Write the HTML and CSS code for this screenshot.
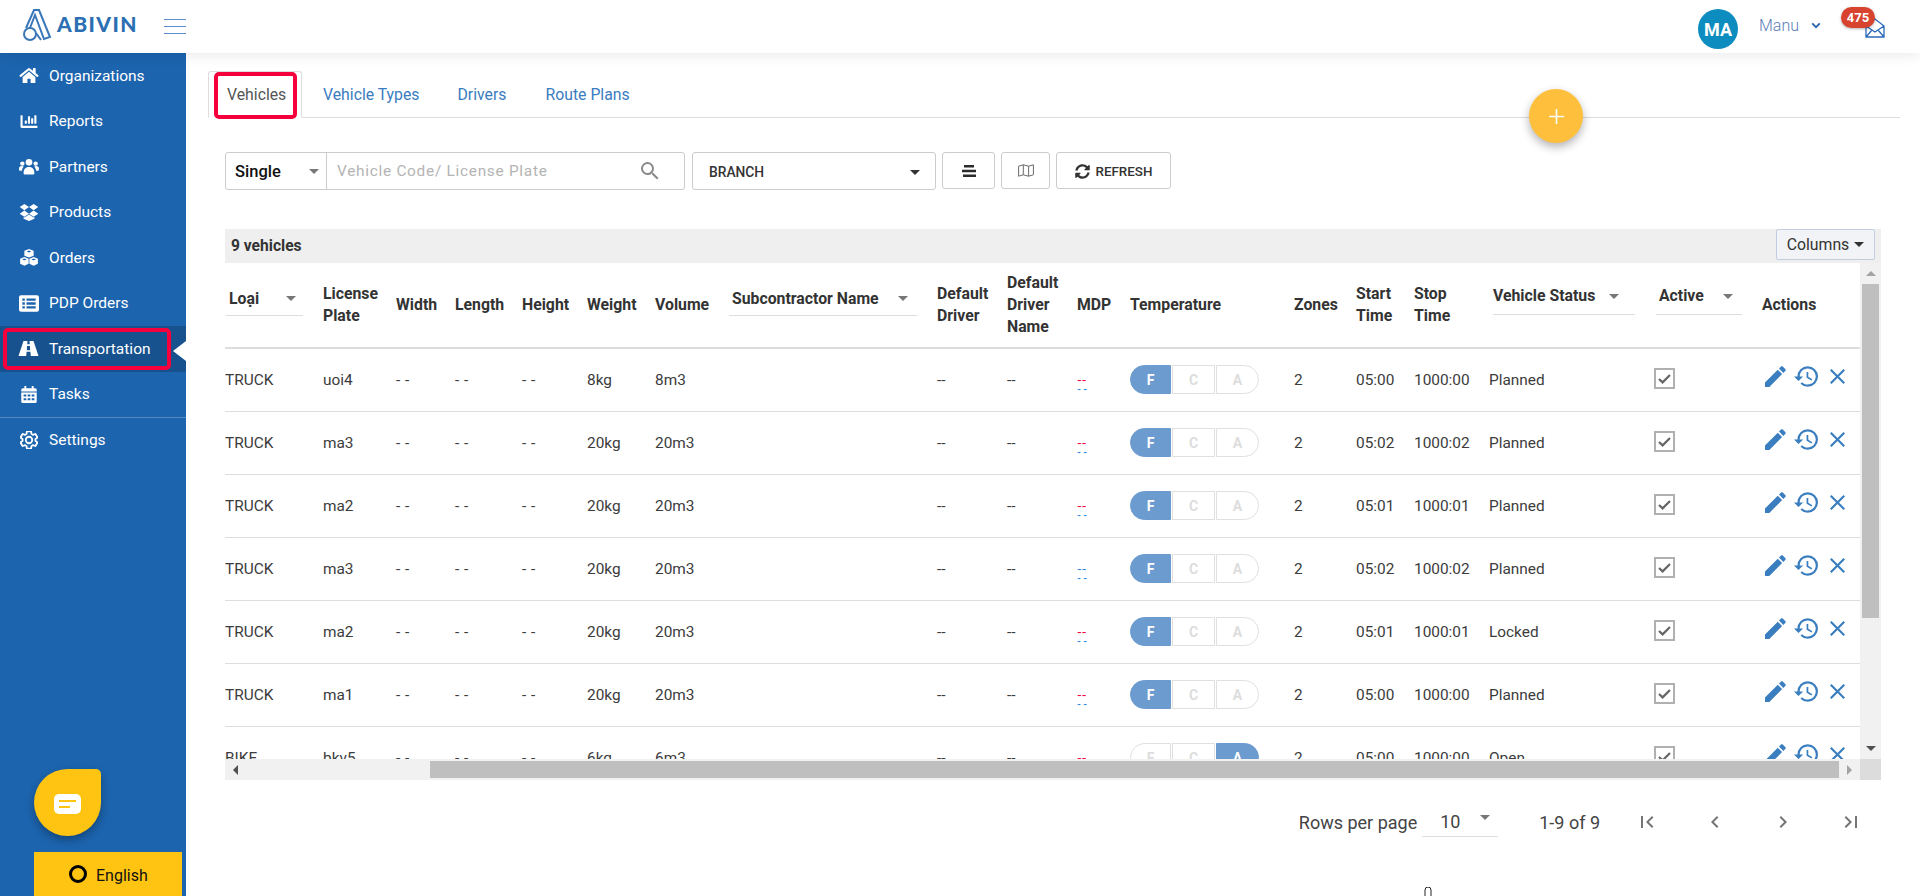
FILE: index.html
```html
<!DOCTYPE html>
<html lang="en">
<head>
<meta charset="utf-8">
<title>Abivin - Vehicles</title>
<link rel="stylesheet" href="styles.css">
</head>
<body>
<svg class="sprite" aria-hidden="true">
  <symbol id="i-edit" viewBox="3 3 18.2 18"><path d="M3 17.25V21h3.75L17.81 9.94l-3.75-3.75L3 17.25zM20.71 7.04c.39-.39.39-1.02 0-1.41l-2.34-2.34a.996.996 0 0 0-1.41 0l-1.83 1.83 3.75 3.75 1.83-1.83z"/></symbol>
  <symbol id="i-history" viewBox="1 3 21 18"><path d="M13 3a9 9 0 0 0-9 9H1l3.89 3.89.07.14L9 12H6c0-3.87 3.13-7 7-7s7 3.13 7 7-3.13 7-7 7c-1.93 0-3.68-.79-4.94-2.06l-1.42 1.42A8.954 8.954 0 0 0 13 21a9 9 0 0 0 0-18zm-1 5v5l4.28 2.54.72-1.21-3.5-2.08V8H12z"/></symbol>
  <symbol id="i-close" viewBox="5 5 14 14"><path d="M19 6.41L17.59 5 12 10.59 6.41 5 5 6.41 10.59 12 5 17.59 6.41 19 12 13.41 17.59 19 19 17.59 13.41 12z"/></symbol>
  <symbol id="i-check" viewBox="0 0 17 17"><path d="M3 9l3.6 3.4L14 5" fill="none" stroke="#666" stroke-width="2.2"/></symbol>
</svg>

<header class="topbar">
  <a class="logo">
    <svg class="logo-mark" viewBox="23 8 30 32"><g fill="none" stroke="#3a77b8" stroke-width="2"><circle cx="30" cy="33" r="6"/><path d="M26 27L34 9h5l11 27-6 2-9-24-5 13"/><path d="M36 32l5 7"/></g></svg>
    <span class="logo-text">ABIVIN</span>
  </a>
  <button class="burger" aria-label="menu"><i></i><i></i><i></i></button>
  <div class="user">
    <span class="avatar">MA</span>
    <span class="user-name">Manu</span>
    <svg class="chev" viewBox="0 0 12 8"><path d="M1.5 1.5L6 6l4.500-4.500" fill="none" stroke="#2a64ad" stroke-width="2.200"/></svg>
    <span class="mail">
      <svg class="mail-icon" viewBox="0 0 20 20"><path d="M1 8L10 1l9 7v11H1zM1 8l9 6 9-6M1 19l6-7M19 19l-6-7" fill="none" stroke="#2a68b8" stroke-width="1.300"/></svg>
      <b class="badge">475</b>
    </span>
  </div>
</header>

<div class="layout">
  <aside class="sidebar">
    <nav class="nav">
      <a class="nav-item"><svg class="nav-ic" viewBox="0 0 576 512"><path d="M280.37 148.26L96 300.11V464a16 16 0 0 0 16 16l112.06-.29a16 16 0 0 0 15.92-16V368a16 16 0 0 1 16-16h64a16 16 0 0 1 16 16v95.64a16 16 0 0 0 16 16.05L464 480a16 16 0 0 0 16-16V300L295.67 148.26a12.19 12.19 0 0 0-15.3 0zM571.6 251.47L488 182.56V44.05a12 12 0 0 0-12-12h-56a12 12 0 0 0-12 12v72.61L318.47 43a48 48 0 0 0-61 0L4.34 251.47a12 12 0 0 0-1.6 16.9l25.5 31A12 12 0 0 0 45.15 301l235.22-193.74a12.19 12.19 0 0 1 15.3 0L530.9 301a12 12 0 0 0 16.9-1.6l25.5-31a12 12 0 0 0-1.7-16.93z"/></svg>Organizations</a>
      <a class="nav-item"><svg class="nav-ic" viewBox="0 0 512 512"><path d="M332.8 320h38.4c6.4 0 12.8-6.4 12.8-12.8V172.8c0-6.4-6.4-12.8-12.8-12.8h-38.4c-6.4 0-12.8 6.4-12.8 12.8v134.4c0 6.4 6.4 12.8 12.8 12.8zm96 0h38.4c6.4 0 12.8-6.4 12.8-12.8V76.8c0-6.4-6.4-12.8-12.8-12.8h-38.4c-6.4 0-12.8 6.4-12.8 12.8v230.4c0 6.4 6.4 12.8 12.8 12.8zm-288 0h38.4c6.4 0 12.8-6.4 12.8-12.8v-70.4c0-6.4-6.4-12.8-12.8-12.8h-38.4c-6.4 0-12.8 6.4-12.8 12.8v70.4c0 6.4 6.4 12.8 12.8 12.8zm96 0h38.4c6.4 0 12.8-6.4 12.8-12.8V108.8c0-6.4-6.4-12.8-12.8-12.8h-38.4c-6.4 0-12.8 6.4-12.8 12.8v198.4c0 6.4 6.4 12.8 12.8 12.8zM496 384H64V80c0-8.84-7.16-16-16-16H16C7.16 64 0 71.16 0 80v336c0 17.67 14.33 32 32 32h464c8.84 0 16-7.16 16-16v-32c0-8.84-7.16-16-16-16z"/></svg>Reports</a>
      <a class="nav-item"><svg class="nav-ic" viewBox="0 0 24 20"><circle cx="12" cy="5" r="4"/><circle cx="4" cy="6.500" r="2.600"/><circle cx="20" cy="6.500" r="2.600"/><path d="M5.500 18c0-4.500 2-7.500 6.500-7.500s6.500 3 6.500 7.500c0 1-1 1.500-1.500 1.500H7c-.5 0-1.500-.5-1.500-1.500zM0 13c0-2.500 1-3.500 3.500-3.500 1 0 1.700.3 2.200.7-1.300 1.200-2 2.700-2.200 4.800H1c-.6 0-1-.6-1-2zM24 13c0-2.500-1-3.500-3.500-3.500-1 0-1.700.3-2.200.7 1.300 1.200 2 2.700 2.200 4.800H23c.6 0 1-.6 1-2z"/></svg>Partners</a>
      <a class="nav-item"><svg class="nav-ic" viewBox="0 0 24 22"><path d="M6 0l6 4-6 4-6-4zM18 0l6 4-6 4-6-4zM6 8.500l6 4-6 4-6-4zM18 8.500l6 4-6 4-6-4zM12 13.500l6 3.900 1-.6v2.200L12 22l-7-3v-2.200l1 .6z"/></svg>Products</a>
      <a class="nav-item"><svg class="nav-ic" viewBox="0 0 24 22"><path fill-rule="evenodd" d="M12 0l6 2.400v6.200L12 11 6 8.600V2.400zM12 2L9 3.200l3 1.200 3-1.200zM6 10.500l5.500 2.200v6.500L6 21.800.5 19.200v-6.500zM6 12.300l-3 1.200 3 1.200 3-1.200zM18 10.500l5.500 2.200v6.500L18 21.800l-5.500-2.600v-6.500zM18 12.300l-3 1.200 3 1.200 3-1.200z"/></svg>Orders</a>
      <a class="nav-item"><svg class="nav-ic" viewBox="0 0 24 20"><path fill-rule="evenodd" d="M2.500 0h19A2.500 2.500 0 0 1 24 2.500v15a2.500 2.500 0 0 1-2.500 2.500h-19A2.500 2.500 0 0 1 0 17.500v-15A2.500 2.500 0 0 1 2.500 0zM4 4v2.800h3V4zM9 4v2.800h11V4zM4 8.600v2.800h3V8.600zM9 8.600v2.800h11V8.600zM4 13.200V16h3v-2.800zM9 13.200V16h11v-2.800z"/></svg>PDP Orders</a>
      <a class="nav-item active"><svg class="nav-ic road" viewBox="0 0 24 18"><path fill-rule="evenodd" d="M6 0h4.800l-.3 4h3l-.3-4H18l6 18h-9.300l-.4-5H9.700l-.4 5H0zM10.300 6l-.3 5h4l-.3-5z"/></svg>Transportation</a>
      <a class="nav-item"><svg class="nav-ic" viewBox="0 0 20 22"><path fill-rule="evenodd" d="M4 0h2.500v3h7V0H16v3h2a2 2 0 0 1 2 2v2H0V5a2 2 0 0 1 2-2h2zM0 8.500h20V20a2 2 0 0 1-2 2H2a2 2 0 0 1-2-2zM3 11v2.500h3.500V11zM8.250 11v2.500h3.500V11zM13.500 11v2.500H17V11zM3 16v2.500h3.500V16zM8.250 16v2.500h3.500V16zM13.500 16v2.500H17V16z"/></svg>Tasks</a>
      <a class="nav-item divided"><svg class="nav-ic gear" viewBox="2 2 20 20"><path fill="none" stroke="#fff" stroke-width="2" d="M19.140 12.940c.04-.3.06-.61.06-.94 0-.32-.02-.64-.07-.94l2.030-1.580a.49.49 0 0 0 .12-.61l-1.920-3.320a.488.488 0 0 0-.59-.22l-2.390.96c-.5-.38-1.030-.7-1.620-.94l-.36-2.540a.484.484 0 0 0-.48-.41h-3.840c-.24 0-.43.17-.47.41l-.36 2.540c-.59.24-1.130.57-1.620.94l-2.390-.96c-.22-.08-.47 0-.59.22L2.740 8.870c-.12.21-.08.47.12.61l2.030 1.580c-.05.3-.09.63-.09.94s.02.64.07.94l-2.030 1.580a.49.49 0 0 0-.12.61l1.920 3.320c.12.22.37.29.59.22l2.390-.96c.5.38 1.030.7 1.620.94l.36 2.540c.05.24.24.41.48.41h3.840c.24 0 .44-.17.47-.41l.36-2.540c.59-.24 1.130-.56 1.620-.94l2.390.96c.22.08.47 0 .59-.22l1.920-3.320c.12-.22.07-.47-.12-.61l-2.010-1.580zM12 15.600c-1.980 0-3.600-1.620-3.600-3.600s1.620-3.600 3.600-3.600 3.600 1.620 3.600 3.600-1.620 3.600-3.600 3.600z"/></svg>Settings</a>
    </nav>
    <div class="side-foot">
      <button class="chat" aria-label="chat"><svg class="chat-ic" viewBox="0 0 27 20"><rect width="27" height="20" rx="5" fill="#fff"/><rect x="5" y="6" width="17" height="2" fill="#ffc412"/><rect x="5" y="12" width="11" height="2" fill="#ffc412"/></svg></button>
      <button class="lang"><i class="lang-ring"></i>English</button>
    </div>
  </aside>

  <main class="content">
    <ul class="tabs">
      <li class="tab current">Vehicles</li>
      <li class="tab">Vehicle Types</li>
      <li class="tab">Drivers</li>
      <li class="tab">Route Plans</li>
    </ul>
    <button class="fab" aria-label="add"><svg viewBox="0 0 16 16"><path d="M8 1v14M1 8h14" stroke="#fff" stroke-width="1.500"/></svg></button>

    <section class="panel">
      <div class="filters">
        <div class="search">
          <div class="search-type">Single<i class="caret grey"></i></div>
          <div class="search-input"><span class="placeholder">Vehicle Code/ License Plate</span><svg class="search-ic" viewBox="3 3 18 18"><path d="M15.500 14h-.79l-.28-.27A6.471 6.471 0 0 0 16 9.500 6.500 6.500 0 1 0 9.500 16c1.610 0 3.090-.59 4.230-1.570l.27.28v.79l5 4.990L20.490 19l-4.990-5zm-6 0C7.010 14 5 11.990 5 9.500S7.010 5 9.500 5 14 7.010 14 9.500 11.990 14 9.500 14z"/></svg></div>
        </div>
        <div class="branch"><span>BRANCH</span><i class="caret dark"></i></div>
        <button class="btn b-align"><svg viewBox="0 0 14 12" class="ic-align"><path d="M2 0h10v2.500H2zM0 4.700h14v2.500H0zM1 9.500h13V12H1z" fill="#2b2b2b"/></svg></button>
        <button class="btn b-map"><svg viewBox="0 0 16 13" class="ic-map"><path d="M.6 2.200L5.300.8l5.300 1.400L15.400.8v10l-4.800 1.400-5.300-1.400L.6 12.200zM5.300.8v10M10.600 2.200v10" fill="none" stroke="#6a6a6a"/></svg></button>
        <button class="btn b-refresh"><svg class="ic-sync" viewBox="0 0 512 512"><path d="M370.720 133.280C339.458 104.008 298.888 87.962 255.848 88c-77.458.068-144.328 53.178-162.791 126.850-1.344 5.363-6.122 9.150-11.651 9.150H24.103c-7.498 0-13.194-6.807-11.807-14.176C33.933 94.924 134.813 8 256 8c66.448 0 126.791 26.136 171.315 68.685L463.030 40.970C478.149 25.851 504 36.559 504 57.941V192c0 13.255-10.745 24-24 24H345.941c-21.382 0-32.090-25.851-16.971-40.971l41.750-41.749zM32 296h134.059c21.382 0 32.090 25.851 16.971 40.971l-41.750 41.750c31.262 29.273 71.835 45.319 114.876 45.280 77.418-.07 144.315-53.144 162.787-126.849 1.344-5.363 6.122-9.150 11.651-9.150h57.304c7.498 0 13.194 6.807 11.807 14.176C478.067 417.076 377.187 504 256 504c-66.448 0-126.791-26.136-171.315-68.685L48.970 471.030C33.851 486.149 8 475.441 8 454.059V320c0-13.255 10.745-24 24-24z"/></svg>REFRESH</button>
      </div>

      <div class="card">
        <div class="card-head">
          <span class="count">9 vehicles</span>
          <button class="columns">Columns<i class="caret dark small"></i></button>
        </div>
        <div class="grid">
          <div class="viewport">
            <table class="vt">
              <colgroup>
                <col class="c1"><col class="c2"><col class="c3"><col class="c4"><col class="c5"><col class="c6"><col class="c7"><col class="c8"><col class="c9"><col class="c10"><col class="c11"><col class="c12"><col class="c13"><col class="c14"><col class="c15"><col class="c16"><col class="c17"><col class="c18">
              </colgroup>
              <thead>
                <tr>
                  <th><div class="flt f-loai"><span>Loại</span><i class="caret grey"></i></div></th>
                  <th>License<br>Plate</th><th>Width</th><th>Length</th><th>Height</th><th>Weight</th><th>Volume</th>
                  <th><div class="flt f-sub"><span>Subcontractor Name</span><i class="caret grey"></i></div></th>
                  <th>Default<br>Driver</th><th>Default<br>Driver<br>Name</th><th>MDP</th><th>Temperature</th><th>Zones</th><th>Start<br>Time</th><th>Stop<br>Time</th>
                  <th><div class="flt f-status"><span>Vehicle Status</span><i class="caret grey"></i></div></th>
                  <th><div class="flt f-active"><span>Active</span><i class="caret grey"></i></div></th>
                  <th class="th-act">Actions</th>
                </tr>
              </thead>
              <tbody>
                <tr><td>TRUCK</td><td>uoi4</td><td>- -</td><td>- -</td><td>- -</td><td>8kg</td><td>8m3</td><td></td><td>--</td><td>--</td>
                  <td><span class="mdp"><b class="red">--</b><b class="blue">- -</b></span></td>
                  <td><span class="tg"><span class="on">F</span><span>C</span><span>A</span></span></td>
                  <td>2</td><td>05:00</td><td>1000:00</td><td>Planned</td>
                  <td><span class="cb"><svg><use href="#i-check"/></svg></span></td>
                  <td><span class="acts"><svg class="a-edit"><use href="#i-edit"/></svg><svg class="a-hist"><use href="#i-history"/></svg><svg class="a-close"><use href="#i-close"/></svg></span></td></tr>
                <tr><td>TRUCK</td><td>ma3</td><td>- -</td><td>- -</td><td>- -</td><td>20kg</td><td>20m3</td><td></td><td>--</td><td>--</td>
                  <td><span class="mdp"><b class="red">--</b><b class="blue">- -</b></span></td>
                  <td><span class="tg"><span class="on">F</span><span>C</span><span>A</span></span></td>
                  <td>2</td><td>05:02</td><td>1000:02</td><td>Planned</td>
                  <td><span class="cb"><svg><use href="#i-check"/></svg></span></td>
                  <td><span class="acts"><svg class="a-edit"><use href="#i-edit"/></svg><svg class="a-hist"><use href="#i-history"/></svg><svg class="a-close"><use href="#i-close"/></svg></span></td></tr>
                <tr><td>TRUCK</td><td>ma2</td><td>- -</td><td>- -</td><td>- -</td><td>20kg</td><td>20m3</td><td></td><td>--</td><td>--</td>
                  <td><span class="mdp"><b class="red">--</b><b class="blue">- -</b></span></td>
                  <td><span class="tg"><span class="on">F</span><span>C</span><span>A</span></span></td>
                  <td>2</td><td>05:01</td><td>1000:01</td><td>Planned</td>
                  <td><span class="cb"><svg><use href="#i-check"/></svg></span></td>
                  <td><span class="acts"><svg class="a-edit"><use href="#i-edit"/></svg><svg class="a-hist"><use href="#i-history"/></svg><svg class="a-close"><use href="#i-close"/></svg></span></td></tr>
                <tr><td>TRUCK</td><td>ma3</td><td>- -</td><td>- -</td><td>- -</td><td>20kg</td><td>20m3</td><td></td><td>--</td><td>--</td>
                  <td><span class="mdp"><b class="blue top">--</b><b class="blue">- -</b></span></td>
                  <td><span class="tg"><span class="on">F</span><span>C</span><span>A</span></span></td>
                  <td>2</td><td>05:02</td><td>1000:02</td><td>Planned</td>
                  <td><span class="cb"><svg><use href="#i-check"/></svg></span></td>
                  <td><span class="acts"><svg class="a-edit"><use href="#i-edit"/></svg><svg class="a-hist"><use href="#i-history"/></svg><svg class="a-close"><use href="#i-close"/></svg></span></td></tr>
                <tr><td>TRUCK</td><td>ma2</td><td>- -</td><td>- -</td><td>- -</td><td>20kg</td><td>20m3</td><td></td><td>--</td><td>--</td>
                  <td><span class="mdp"><b class="red">--</b><b class="blue">- -</b></span></td>
                  <td><span class="tg"><span class="on">F</span><span>C</span><span>A</span></span></td>
                  <td>2</td><td>05:01</td><td>1000:01</td><td>Locked</td>
                  <td><span class="cb"><svg><use href="#i-check"/></svg></span></td>
                  <td><span class="acts"><svg class="a-edit"><use href="#i-edit"/></svg><svg class="a-hist"><use href="#i-history"/></svg><svg class="a-close"><use href="#i-close"/></svg></span></td></tr>
                <tr><td>TRUCK</td><td>ma1</td><td>- -</td><td>- -</td><td>- -</td><td>20kg</td><td>20m3</td><td></td><td>--</td><td>--</td>
                  <td><span class="mdp"><b class="red">--</b><b class="blue">- -</b></span></td>
                  <td><span class="tg"><span class="on">F</span><span>C</span><span>A</span></span></td>
                  <td>2</td><td>05:00</td><td>1000:00</td><td>Planned</td>
                  <td><span class="cb"><svg><use href="#i-check"/></svg></span></td>
                  <td><span class="acts"><svg class="a-edit"><use href="#i-edit"/></svg><svg class="a-hist"><use href="#i-history"/></svg><svg class="a-close"><use href="#i-close"/></svg></span></td></tr>
                <tr><td>BIKE</td><td>bkv5</td><td>- -</td><td>- -</td><td>- -</td><td>6kg</td><td>6m3</td><td></td><td>--</td><td>--</td>
                  <td><span class="mdp"><b class="red">--</b><b class="blue">- -</b></span></td>
                  <td><span class="tg"><span>F</span><span>C</span><span class="on">A</span></span></td>
                  <td>2</td><td>05:00</td><td>1000:00</td><td>Open</td>
                  <td><span class="cb"><svg><use href="#i-check"/></svg></span></td>
                  <td><span class="acts"><svg class="a-edit"><use href="#i-edit"/></svg><svg class="a-hist"><use href="#i-history"/></svg><svg class="a-close"><use href="#i-close"/></svg></span></td></tr>
              </tbody>
            </table>
          </div>
          <div class="vbar">
            <span class="arrow"><i class="tri up off"></i></span>
            <span class="vthumb"></span>
            <span class="arrow end"><i class="tri down"></i></span>
          </div>
          <div class="hbar">
            <span class="arrow"><i class="tri left"></i></span>
            <span class="hthumb"></span>
            <span class="arrow"><i class="tri right off"></i></span>
          </div>
          <div class="corner"></div>
        </div>
      </div>

      <div class="pager">
        <span class="rows-label">Rows per page</span>
        <span class="rows-select"><span>10</span><i class="caret grey"></i></span>
        <span class="range">1-9 of 9</span>
        <svg class="pg" viewBox="0 0 24 24"><path d="M18.410 16.590L13.820 12l4.590-4.590L17 6l-6 6 6 6zM6 6h2v12H6z"/></svg>
        <svg class="pg" viewBox="0 0 24 24"><path d="M15.410 7.410L14 6l-6 6 6 6 1.410-1.410L10.830 12z"/></svg>
        <svg class="pg" viewBox="0 0 24 24"><path d="M10 6L8.590 7.410 13.170 12l-4.580 4.590L10 18l6-6z"/></svg>
        <svg class="pg" viewBox="0 0 24 24"><path d="M5.590 7.410L10.180 12l-4.590 4.590L7 18l6-6-6-6zM16 6h2v12h-2z"/></svg>
      </div>
    </section>
  </main>
</div>

<svg class="pointer" viewBox="0 0 8 10"><path d="M1 10V3a3 3 0 0 1 6 0v7" fill="#fff" stroke="#222"/></svg>
</body>
</html>
```

FILE: styles.css
```css
*, *::before, *::after { box-sizing: border-box; }
html, body { margin: 0; height: 100%; }
body {
  position: relative;
  height: 896px;
  overflow: hidden;
  background: #fff;
  color: #333;
  font-family: Roboto, "Liberation Sans", sans-serif;
  font-size: 15.4px;
}
button { font: inherit; color: inherit; background: none; border: 0; padding: 0; }
ul { list-style: none; margin: 0; padding: 0; }
.sprite { display: none; }

/* top bar */
.topbar {
  position: relative;
  z-index: 5;
  height: 53px;
  display: flex;
  align-items: center;
  background: #fff;
  box-shadow: 0 3px 12px rgba(0, 0, 0, .08);
}
.logo { display: flex; align-items: center; margin-left: 23px; }
.logo-mark { width: 30px; height: 32px; margin-top: -4px; }
.logo-text {
  margin-left: 4px;
  margin-top: -6px;
  font-family: Lato, sans-serif;
  font-weight: 900;
  font-size: 21px;
  letter-spacing: 1.4px;
  color: #2c6fb3;
}
.burger { width: 22px; margin-left: 26px; margin-top: -1px; display: flex; flex-direction: column; gap: 6px; }
.burger i { height: 1px; background: #5c8fce; display: block; }
.user { margin-left: auto; display: flex; align-items: center; padding-right: 35px; }
.avatar {
  width: 40px; height: 40px; border-radius: 50%;
  background: #0d8cbf; color: #fff;
  font-weight: 700; font-size: 18px;
  display: flex; align-items: center; justify-content: center;
  margin-top: 5px;
}
.user-name { margin-left: 21px; color: #5b7db8; font-size: 16px; font-weight: 300; margin-top: -3px; }
.chev { width: 10px; height: 7px; margin-left: 12px; margin-top: -3px; }
.mail { position: relative; width: 20px; height: 20px; margin-left: 44px; margin-top: 2px; }
.mail-icon { width: 20px; height: 20px; display: block; }
.badge {
  position: absolute; top: -11px; left: -24px;
  width: 34px; height: 21px; border-radius: 11px;
  background: #d8432f; color: #fff;
  font-size: 13px; font-weight: 700;
  display: flex; align-items: center; justify-content: center;
  box-shadow: 0 1px 3px rgba(0, 0, 0, .3);
}

/* layout */
.layout { display: flex; height: 843px; }

/* sidebar */
.sidebar {
  width: 186px;
  flex: none;
  background: #1c64ae;
  color: #fff;
  display: flex;
  flex-direction: column;
}
.nav-item {
  position: relative;
  height: 45.5px;
  display: flex;
  align-items: center;
  font-size: 15.5px;
  padding-left: 49px;
}
.nav-ic { position: absolute; left: 19px; top: 14px; width: 20px; height: 17px; fill: #fff; }
.nav-ic.road { top: 15px; width: 21px; height: 15px; left: 18px; }
.nav-ic.gear { top: 13px; left: 20px; width: 18px; height: 18px; }
.nav-item.active { background: #17528f; }
.nav-item.active::before {
  content: "";
  position: absolute; right: 0; top: 15px;
  border: 10px solid transparent;
  border-left: 0;
  border-right: 13px solid #fff;
}
.nav-item.active::after {
  content: "";
  position: absolute; left: 3px; top: 2px;
  width: 168px; height: 42px;
  border: 4px solid #f5003c;
  border-radius: 5px;
}
.nav-item.divided { border-top: 1px solid rgba(255, 255, 255, .25); }
.side-foot { margin-top: auto; padding-left: 34px; display: flex; flex-direction: column; }
.chat {
  width: 67px; height: 67px;
  border-radius: 50% 5px 50% 50%;
  background: #ffc412;
  box-shadow: 0 4px 8px rgba(0, 0, 0, .3);
  display: flex; align-items: center; justify-content: center;
}
.chat-ic { width: 27px; height: 20px; margin-top: 2px; }
.lang {
  margin-top: 16px;
  width: 148px; height: 44px;
  background: #ffc412; color: #111;
  display: flex; align-items: center;
  padding: 2px 0 0 35px;
  font-size: 16px;
}
.lang-ring { width: 18px; height: 18px; border: 3.5px solid #000; border-radius: 50%; margin-right: 9px; margin-top: -2px; }

/* content */
.content { position: relative; flex: 1; padding: 18px 20px 0 22px; }
.tabs { display: flex; border-bottom: 1px solid #ddd; height: 47px; }
.tab {
  position: relative;
  height: 47px;
  padding: 0 19px;
  display: flex; align-items: center;
  color: #3a7cc0;
  font-size: 15.8px;
  white-space: nowrap;
}
.tab:nth-child(3) { padding-right: 20px; }
.tab.current {
  color: #555;
  border: 1px solid #ddd;
  border-bottom: 1px solid #fff;
  border-radius: 3px 3px 0 0;
  padding: 0 18px;
  width: 94px;
  margin-right: 2px;
}
.tab.current::after {
  content: "";
  position: absolute; left: 5px; top: 0;
  width: 83px; height: 47px;
  border: 4px solid #f5003c;
  border-radius: 5px;
}
.fab {
  position: absolute; left: 1343px; top: 36px;
  width: 54px; height: 54px; border-radius: 50%;
  background: #fdbf3c;
  box-shadow: 0 4px 10px rgba(0, 0, 0, .3);
  display: flex; align-items: center; justify-content: center;
}
.fab svg { width: 17px; height: 17px; }

.panel { padding: 34px 19px 0 17px; }
.filters { display: flex; align-items: flex-start; }
.search {
  width: 460px; height: 38px;
  display: flex;
  border: 1px solid #ccc;
  border-radius: 3px;
}
.search-type {
  width: 101px; flex: none;
  display: flex; align-items: center;
  padding-left: 9px;
  border-right: 1px solid #ccc;
  color: #111; font-weight: 500; font-size: 16.5px;
  position: relative;
}
.search-type .caret { margin-left: 28px; }
.search-input { flex: 1; display: flex; align-items: center; padding: 0 25px 0 10px; }
.placeholder { color: #b4b4b4; letter-spacing: .72px; font-size: 15.4px; }
.search-ic { width: 18px; height: 18px; margin-left: auto; fill: #8a8a8a; }
.branch {
  width: 244px; height: 38px;
  margin-left: 7px;
  display: flex; align-items: center; justify-content: space-between;
  padding: 2px 15px 0 16px;
  border: 1px solid #ccc; border-radius: 3px;
  color: #333; font-size: 13.800px; font-weight: 500;
}
.btn {
  height: 37px;
  margin-left: 6px;
  border: 1px solid #ccc; border-radius: 3px;
  display: flex; align-items: center; justify-content: center;
}
.b-align { width: 53px; }
.b-map { width: 49px; }
.b-refresh { width: 115px; padding-top: 1px; font-size: 13.4px; font-weight: 500; color: #333; }
.ic-align { width: 14px; height: 12px; }
.ic-map { width: 16px; height: 13px; }
.ic-sync { width: 15px; height: 15px; margin-right: 6px; fill: #333; }

.card { margin-top: 39px; }
.card-head {
  height: 34px;
  background: #efefef;
  display: flex; align-items: center; justify-content: space-between;
  padding: 0 6px;
}
.count { font-weight: 700; font-size: 15.6px; color: #333; }
.columns {
  width: 99px; height: 31px;
  margin-top: -3px;
  border: 1px solid #c2cddf; border-radius: 2px;
  background: #f1f3f6;
  display: flex; align-items: center; justify-content: center;
  font-size: 15.8px; color: #333;
}
.columns .caret { margin-left: 5px; }

.grid { display: grid; grid-template-columns: 1635px 21px; grid-template-rows: 496px 21px; }
.viewport { overflow: hidden; }
.vt { width: 1635px; table-layout: fixed; border-collapse: collapse; }
.c1 { width: 98px; } .c2 { width: 73px; } .c3 { width: 59px; } .c4 { width: 67px; } .c5 { width: 65px; } .c6 { width: 68px; }
.c7 { width: 74px; } .c8 { width: 208px; } .c9 { width: 70px; } .c10 { width: 70px; } .c11 { width: 53px; } .c12 { width: 164px; }
.c13 { width: 62px; } .c14 { width: 58px; } .c15 { width: 75px; } .c16 { width: 165px; } .c17 { width: 108px; } .c18 { width: 98px; }
.vt th {
  height: 85px;
  padding: 0;
  text-align: left;
  font-size: 15.8px;
  font-weight: 700;
  line-height: 22px;
  color: #333;
  border-bottom: 2px solid #ddd;
  vertical-align: middle;
  white-space: nowrap;
}
.vt td {
  height: 63px;
  padding: 0;
  border-bottom: 1px solid #ddd;
  vertical-align: middle;
  white-space: nowrap;
  font-size: 15.4px;
  color: #3c3c3c;
}
.vt tbody td:nth-child(3), .vt tbody td:nth-child(4), .vt tbody td:nth-child(5) { letter-spacing: .5px; }
.flt {
  display: flex; align-items: center; justify-content: space-between;
  height: 32px;
  border-bottom: 1px solid #ddd;
  padding: 0 0 2px 3px;
}
.f-loai { width: 77px; margin-left: 1px; margin-bottom: 10px; padding-right: 7px; }
.f-sub { width: 188px; margin-bottom: 10px; padding-right: 9px; }
.f-status { height: 34px; width: 142px; margin-left: 4px; margin-bottom: 15px; padding-left: 0; padding-right: 16px; }
.f-active { height: 34px; width: 86px; margin-left: 2px; margin-bottom: 15px; padding-right: 9px; }

.mdp { display: block; margin-top: 10px; font-size: 9px; line-height: 9px; }
.mdp b { display: block; font-weight: 700; transform-origin: left center; }
.mdp .red, .mdp .top { letter-spacing: 0; transform: scaleX(1.35); }
.mdp .red { color: #f5003c; }
.mdp .blue { color: #2f86dc; }
.mdp .blue:not(.top) { transform: scaleX(1.1); }

.tg { display: inline-flex; gap: 1px; vertical-align: middle; }
.tg span {
  width: 43px; height: 29px;
  display: flex; align-items: center; justify-content: center;
  border: 1px solid #e0e0e0;
  color: #ddd;
  font-size: 14px; font-weight: 700;
}
.tg span:first-child { width: 41px; border-radius: 15px 0 0 15px; }
.tg span:last-child { border-radius: 0 15px 15px 0; }
.tg .on { background: #6c9bcf; border-color: #6c9bcf; color: #fff; }

.cb {
  display: flex; align-items: center; justify-content: center;
  width: 21px; height: 21px;
  margin-top: -2px;
  border: 2px solid #b0b0b0;
}
.cb svg { width: 17px; height: 17px; }

.acts { display: flex; align-items: center; margin-left: 3px; margin-top: -7px; fill: #3a7ebf; }
.a-edit { width: 21px; height: 21px; }
.a-hist { width: 24px; height: 21px; margin-left: 8px; }
.a-close { width: 15px; height: 15px; margin-left: 12px; }

.vbar, .hbar { background: #f1f1f1; display: flex; }
.vbar { flex-direction: column; align-items: stretch; }
.hbar { align-items: center; }
.arrow { flex: none; width: 21px; height: 21px; display: flex; align-items: center; justify-content: center; }
.arrow.end { margin-top: auto; }
.vthumb { height: 334px; margin: 0 2px; background: #bfbfbf; }
.hthumb { width: 1409px; height: 17px; margin-left: 184px; background: #bfbfbf; }
.corner { background: #dcdcdc; }
.tri { width: 0; height: 0; border: 5px solid transparent; display: block; }
.tri.up { border-top: 0; border-bottom: 5px solid #505050; }
.tri.down { border-bottom: 0; border-top: 5px solid #505050; }
.tri.left { border-left: 0; border-right: 5px solid #505050; }
.tri.right { border-right: 0; border-left: 5px solid #505050; }
.tri.up.off { border-bottom-color: #a3a3a3; }
.tri.right.off { border-left-color: #a3a3a3; }

.caret { display: inline-block; width: 0; height: 0; border: 5px solid transparent; border-bottom: 0; flex: none; }
.caret.grey { border-top: 5px solid #777; }
.caret.dark { border-top: 5px solid #333; }

.pager { display: flex; align-items: center; padding-top: 28px; height: 56px; padding-right: 18px; }
.rows-label { margin-left: auto; font-size: 18px; color: #444; }
.rows-select {
  width: 76px; height: 30px;
  margin-left: 5px;
  display: flex; align-items: center; justify-content: space-between;
  padding: 0 8px 0 18px;
  border-bottom: 1px solid #ddd;
  font-size: 18px; color: #444;
}
.rows-select .caret { margin-top: -8px; }
.range { margin-left: 41px; margin-right: 35px; font-size: 18px; color: #444; }
.pg { width: 24px; height: 24px; margin-right: 44px; fill: #757575; }
.pg:last-child { margin-right: 0; }

.pointer { position: absolute; left: 1424px; top: 887px; width: 8px; height: 10px; }
```
